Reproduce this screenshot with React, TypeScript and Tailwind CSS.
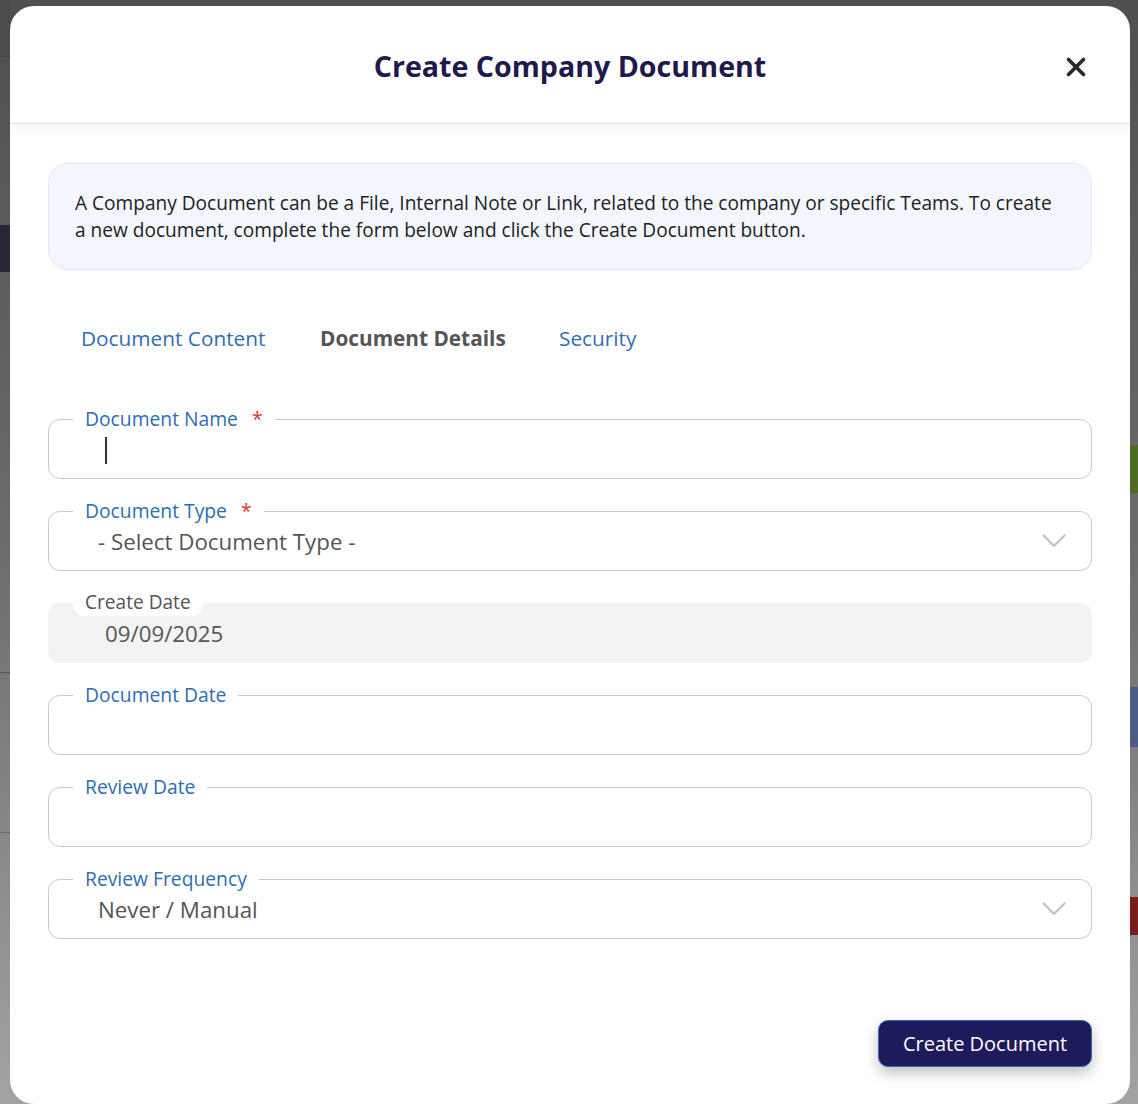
import { X } from "lucide-react";

const FONT = { fontFamily: '"Open Sans", "Noto Sans", Arial, sans-serif' };

interface FieldProps {
  label: string;
  required?: boolean;
  value?: string;
  select?: boolean;
  cursor?: boolean;
}

function Chevron() {
  return (
    <svg className="ml-auto" width="24" height="14" viewBox="0 0 24 14" fill="none">
      <polyline points="1.5,1.5 12,12 22.5,1.5" stroke="#c2c2c2" strokeWidth="2.4" strokeLinecap="round" strokeLinejoin="round" />
    </svg>
  );
}

function OutlinedField({ label, required, value, select, cursor }: FieldProps) {
  return (
    <div className="relative h-[60px] rounded-xl border border-[#c9c9c9] bg-white flex items-center pl-[49px] pr-[25px]">
      <div className="absolute -top-[15px] left-[24px] bg-white px-3 text-[19.3px] leading-[27px] text-[#2e6db4] flex items-center">
        <span>{label}</span>
        {required && <span className="ml-[14px] text-[#e5322d]">*</span>}
      </div>
      {cursor && <div className="w-[2px] h-[27px] bg-[#333] ml-[7px] mt-[2px]"></div>}
      {value && <span className="text-[22.3px] text-[#555] mt-[1px]">{value}</span>}
      {select && <Chevron />}
    </div>
  );
}

export default function App() {
  return (
    <div className="relative w-[1138px] h-[1104px] overflow-hidden" style={FONT}>
      {/* dimmed page behind the dialog */}
      <div className="w-full h-full flex justify-between bg-gradient-to-b from-[#4e4f50] via-[#6b6c6e] to-[#a3a3a3]">
        <div className="w-[10px] flex flex-col">
          <div className="h-[56px] bg-[#4b4c4d]"></div>
          <div className="h-[169px] border-t border-[#444]"></div>
          <div className="h-[47px] bg-[#262637]"></div>
          <div className="h-[400px]"></div>
          <div className="h-[160px] border-t border-dashed border-[#555]"></div>
          <div className="h-[200px] border-t border-dashed border-[#666]"></div>
        </div>
        <div className="w-[8px] flex flex-col">
          <div className="h-[445px]"></div>
          <div className="h-[48px] bg-[#4e6b22]"></div>
          <div className="h-[194px]"></div>
          <div className="h-[60px] bg-[#4b5d86]"></div>
          <div className="h-[150px]"></div>
          <div className="h-[38px] bg-[#7b1d1d]"></div>
        </div>
      </div>

      {/* dialog */}
      <div className="absolute left-[10px] top-[6px] w-[1120px] h-[1098px] bg-white rounded-[24px] overflow-hidden flex flex-col">
        <div className="relative h-[118px] flex items-center justify-center border-b border-[#e2e2e2] shadow-[0_4px_14px_rgba(0,0,0,0.05)]">
          <h1 className="mt-[4px] text-[28.6px] font-bold text-[#1f1a4e]">Create Company Document</h1>
          <button className="absolute right-[39px] top-[46px] text-[#2b2b2b]">
            <X className="w-[30px] h-[30px]" strokeWidth={3} />
          </button>
        </div>

        <div className="px-[38px] pt-[39px]">
          <div className="h-[107px] rounded-[20px] border border-[#e1e7f0] bg-[#f3f7fd] pl-[26px] pr-[28px] pt-[26px] text-[19.1px] leading-[27px] text-[#222]">
            A Company Document can be a File, Internal Note or Link, related to the company or specific Teams. To create a new document, complete the form below and click the Create Document button.
          </div>

          <div className="mt-[54px] pl-[33px] flex text-[20.8px] leading-[28px]">
            <span className="w-[239px] text-[#2f6eb5]">Document Content</span>
            <span className="w-[239px] font-bold text-[#555]">Document Details</span>
            <span className="text-[#2f6eb5]">Security</span>
          </div>

          <div className="mt-[67px] flex flex-col gap-[32px]">
            <OutlinedField label="Document Name" required cursor />
            <OutlinedField label="Document Type" required value="- Select Document Type -" select />
            <div className="relative h-[60px] rounded-xl bg-[#f3f3f3] flex items-center pl-[57px]">
              <div className="absolute -top-[14px] left-[25px] bg-white rounded-b-xl rounded-t-md px-3 text-[19.1px] leading-[27px] text-[#555]">
                Create Date
              </div>
              <span className="text-[22.3px] text-[#555] mt-[2px]">09/09/2025</span>
            </div>
            <OutlinedField label="Document Date" />
            <OutlinedField label="Review Date" />
            <OutlinedField label="Review Frequency" value="Never / Manual" select />
          </div>

          <div className="mt-[81px] flex justify-end">
            <button className="h-[47px] w-[214px] rounded-[10px] bg-[#1e1b5c] border border-[#3d6bb0] text-white text-[20px] shadow-[0_6px_14px_rgba(0,0,0,0.25)]">
              Create Document
            </button>
          </div>
        </div>
      </div>
    </div>
  );
}
